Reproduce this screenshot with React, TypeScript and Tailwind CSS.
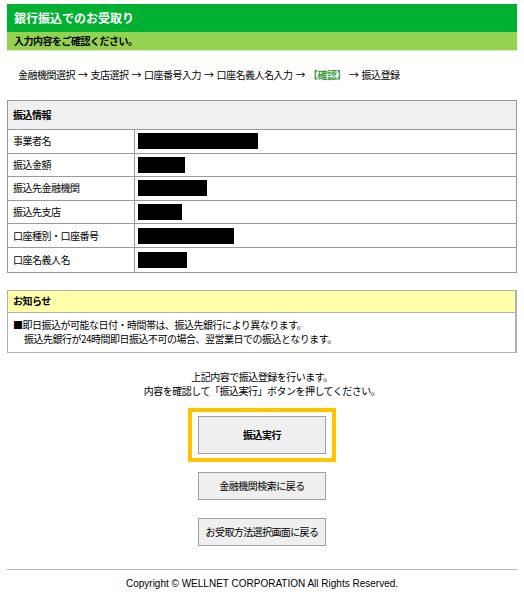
import React from 'react';

const rows: { label: string; w: number }[] = [
    { label: '事業者名', w: 120 },
    { label: '振込金額', w: 47 },
    { label: '振込先金融機関', w: 69 },
    { label: '振込先支店', w: 44 },
    { label: '口座種別・口座番号', w: 96 },
    { label: '口座名義人名', w: 49 },
];

const font = { fontFamily: '"Noto Sans CJK JP", "Liberation Sans", sans-serif' };

const App: React.FC = () => {
    return (
        <div className="w-[524px] h-[596px] bg-white text-black text-[10px] tracking-[-0.5px] leading-none pt-[4px] px-[7px]" style={font}>
            {/* header */}
            <div className="bg-[#00b031] h-[28px] flex items-center pl-[7px]">
                <h1 className="text-white font-bold text-[12px] tracking-normal">銀行振込でのお受取り</h1>
            </div>
            <div className="bg-[#94d352] h-[19px] flex items-center pl-[7px] border-b border-[#d8efc4]">
                <span className="font-bold">入力内容をご確認ください。</span>
            </div>

            {/* breadcrumb */}
            <div className="mt-[17px] pl-[11px] h-[14px] flex items-center gap-[3px]">
                <span>金融機関選択</span>
                <span>→</span>
                <span>支店選択</span>
                <span>→</span>
                <span>口座番号入力</span>
                <span>→</span>
                <span>口座名義人名入力</span>
                <span>→</span>
                <span className="text-[#3a9a3a] font-bold">【確認】</span>
                <span>→</span>
                <span>振込登録</span>
            </div>

            {/* transfer info */}
            <div className="mt-[18px] border border-[#9a9a9a]">
                <div className="bg-[#f0f0f0] h-[29px] flex items-center pl-[5px] border-b border-[#9a9a9a] font-bold">
                    振込情報
                </div>
                {rows.map((r, i) => (
                    <div
                        key={r.label}
                        className={`flex h-[23.6px] ${i < rows.length - 1 ? 'border-b border-[#9a9a9a]' : ''}`}
                    >
                        <div className="w-[127px] shrink-0 flex items-center pl-[5px] border-r border-[#9a9a9a]">
                            {r.label}
                        </div>
                        <div className="flex items-center pl-[3px]">
                            <div className="h-[16px] bg-black" style={{ width: r.w }} />
                        </div>
                    </div>
                ))}
            </div>

            {/* notice */}
            <div className="mt-[17px] border border-[#b0b0b0] border-r-2">
                <div className="bg-[#ffffaa] h-[22px] flex items-center pl-[5px] border-b border-[#b0b0b0] font-bold">
                    お知らせ
                </div>
                <div className="px-[5px] pt-[5px] pb-[5px] leading-[14.5px]">
                    <div>■即日振込が可能な日付・時間帯は、振込先銀行により異なります。</div>
                    <div className="pl-[11px]">振込先銀行が24時間即日振込不可の場合、翌営業日での振込となります。</div>
                </div>
            </div>

            {/* confirm message */}
            <div className="mt-[17px] text-center leading-[14.5px]">
                <div>上記内容で振込登録を行います。</div>
                <div>内容を確認して「振込実行」ボタンを押してください。</div>
            </div>

            {/* buttons */}
            <div className="mt-[9px] flex flex-col items-center">
                <div className="border-[4px] border-[#ffc400] px-[6px] py-[4px] bg-white">
                    <button className="w-[128px] h-[38px] bg-[#efefef] border border-[#a0a0a0] font-bold text-[10px] tracking-[-0.5px]" style={font}>
                        振込実行
                    </button>
                </div>
                <button className="mt-[10px] w-[128px] h-[28px] bg-[#efefef] border border-[#a0a0a0] text-[10px] tracking-[-0.5px] px-0" style={font}>
                    金融機関検索に戻る
                </button>
                <button className="mt-[18px] w-[128px] h-[28px] bg-[#efefef] border border-[#a0a0a0] text-[10px] tracking-[-0.6px] px-0 whitespace-nowrap" style={font}>
                    お受取方法選択画面に戻る
                </button>
            </div>

            {/* footer */}
            <div className="mt-[23px] border-t border-[#b8b8b8] pt-[7px] text-center leading-[12px]">
                <span style={{ fontFamily: '"Liberation Sans", "Noto Sans CJK JP", sans-serif' }} className="text-[10px] tracking-normal">
                    Copyright © WELLNET CORPORATION All Rights Reserved.
                </span>
            </div>
        </div>
    );
};

export default App;
